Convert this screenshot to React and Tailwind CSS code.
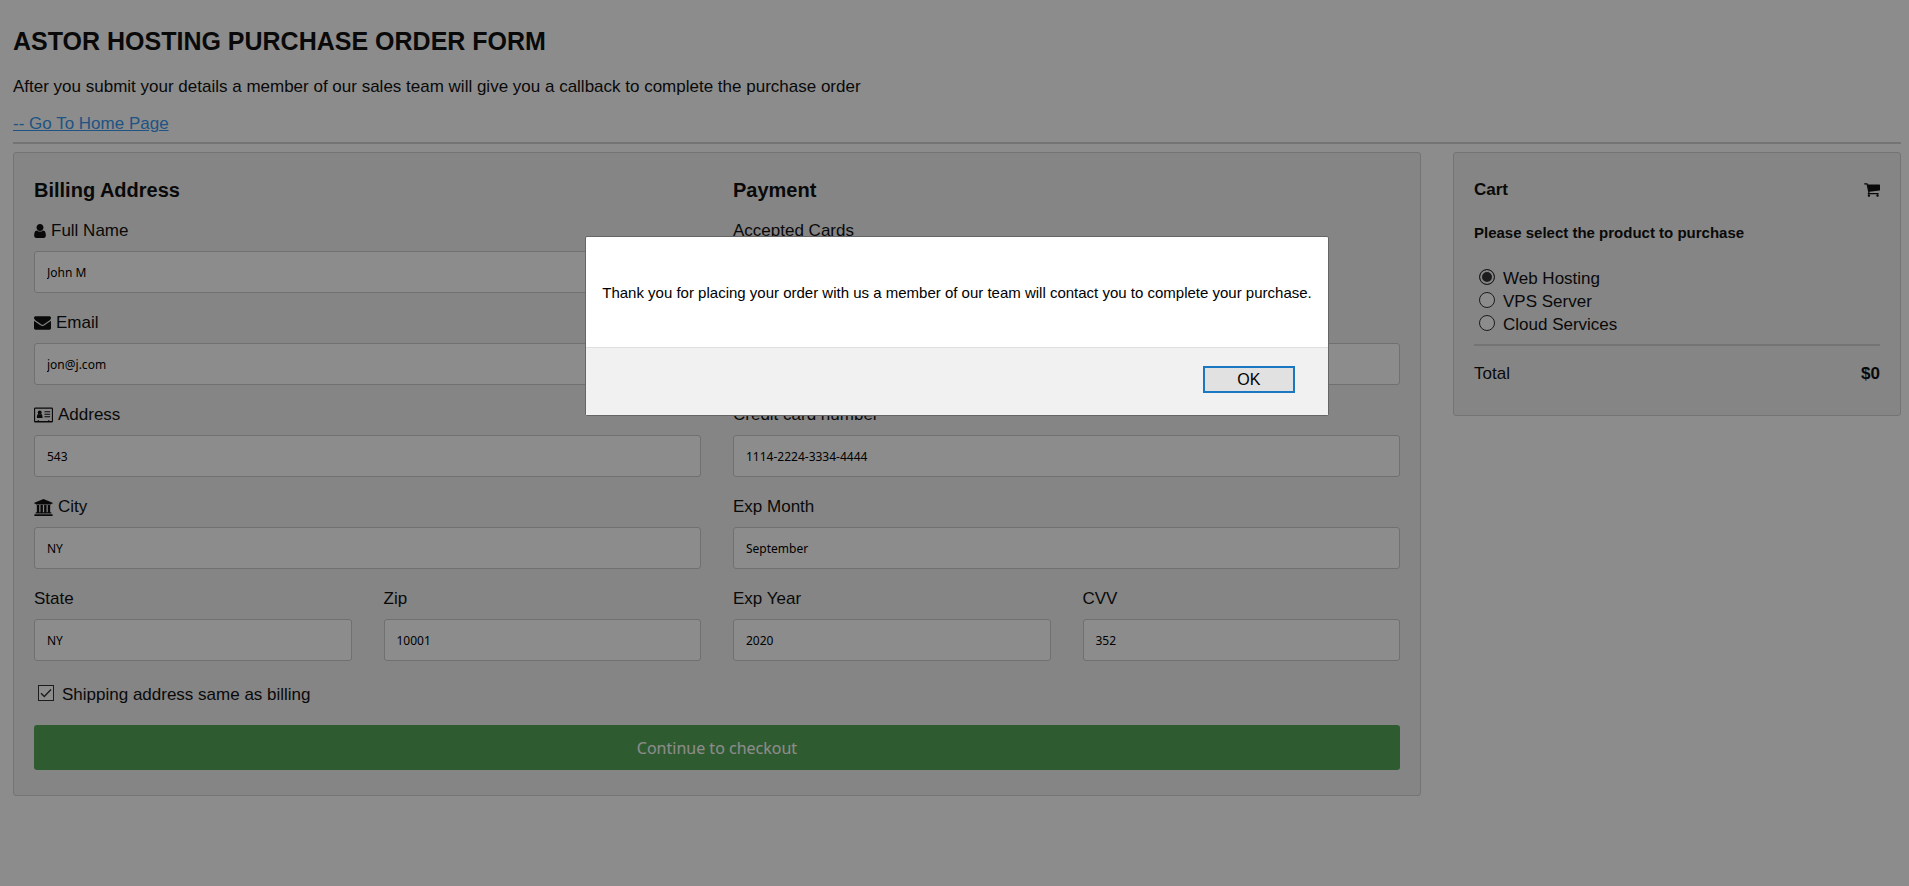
function Icon({ viewBox, className, children }) {
  return (
    <svg viewBox={viewBox} className={className} fill="currentColor" aria-hidden="true">
      {children}
    </svg>
  );
}

const UserIcon = () => (
  <Icon viewBox="0 0 1280 1536" className="h-[14px] w-3">
    <path d="M1280 1271q0 109-62.500 187t-150.500 78h-854q-88 0-150.500-78t-62.500-187q0-85 8.500-160.500t31.500-152 58.500-131 94-89 134.500-34.500q131 128 313 128t313-128q76 0 134.500 34.500t94 89 58.500 131 31.500 152 8.500 160.500zM1024 384q0 159-112.500 271.500t-271.500 112.500-271.500-112.500-112.500-271.500 112.500-271.500 271.500-112.500 271.500 112.500 112.500 271.500z" />
  </Icon>
);

const MailIcon = () => (
  <Icon viewBox="0 0 1792 1408" className="h-[14px] w-[17px]">
    <path d="M1792 454v794q0 66-47 113t-113 47h-1472q-66 0-113-47t-47-113v-794q44 49 101 87 362 246 497 345 57 42 92.500 65.500t94.500 48 110 24.500h2q51 0 110-24.500t94.500-48 92.500-65.500q170-123 498-345 57-39 100-87zM1792 160q0 79-49 151t-122 123q-376 261-468 325-10 7-42.500 30.500t-54 38-52 32.500-57.500 27-50 9h-2q-23 0-50-9t-57.500-27-52-32.500-54-38-42.500-30.500q-91-64-262-182.500t-205-142.500q-62-42-117-115.500t-55-136.500q0-78 41.500-130t118.500-52h1472q65 0 112.500 47t47.500 113z" />
  </Icon>
);

const CardIcon = () => (
  <Icon viewBox="0 0 20 16" className="h-4 w-[19px]">
    <path
      fillRule="evenodd"
      d="M1.500 0h17A1.500 1.500 0 0 1 20 1.500v13a1.500 1.500 0 0 1-1.500 1.500h-17A1.500 1.500 0 0 1 0 14.500v-13A1.500 1.500 0 0 1 1.500 0zM1.200 1.500v12.800h2.600v-.8h1.400v.8h9.600v-.8h1.400v.8h2.600V1.500z"
    />
    <circle cx="6" cy="5.400" r="2.100" />
    <path d="M3 11.200c0-2.500.6-4.200 1.700-4.200.8.700 1.900.7 2.700 0C8.500 7 9 8.700 9 11.200z" />
    <path d="M11 4h6v1h-6zM11 6.700h6v1h-6zM11 9.400h6v1h-6z" />
  </Icon>
);

const BankIcon = () => (
  <Icon viewBox="0 0 1920 1792" className="h-[17px] w-[19px]">
    <path d="M960 0l960 384v128h-128q0 26-20.500 45t-48.500 19h-1526q-28 0-48.500-19t-20.500-45h-128v-128zM256 640h256v768h128v-768h256v768h128v-768h256v768h128v-768h256v768h59q28 0 48.500 19t20.500 45v64h-1664v-64q0-26 20.500-45t48.500-19h59v-768zM1851 1600q28 0 48.500 19t20.500 45v128h-1920v-128q0-26 20.500-45t48.500-19h1782z" />
  </Icon>
);

const CartIcon = () => (
  <Icon viewBox="0 0 1664 1408" className="h-[14px] w-4">
    <path d="M640 1280q0 52-38 90t-90 38-90-38-38-90 38-90 90-38 90 38 38 90zM1536 1280q0 52-38 90t-90 38-90-38-38-90 38-90 90-38 90 38 38 90zM1664 192v512q0 24-16.500 42.500t-40.500 21.500l-1044 122q13 60 13 70 0 16-24 64h920q26 0 45 19t19 45-19 45-45 19h-1024q-26 0-45-19t-19-45q0-11 8-31.500t16-36 21.500-40 15.500-29.500l-177-823h-204q-26 0-45-19t-19-45 19-45 45-19h256q16 0 28.500 6.500t19.500 15.500 13 24.500 8 26 5.500 29.500 4.500 26h1201q26 0 45 19t19 45z" />
  </Icon>
);

function Field({ id, label, icon, value, type = "text" }) {
  return (
    <div className="mb-5 flex flex-col gap-[10px]">
      <label htmlFor={id} className="flex h-5 items-center gap-[5px]">
        {icon}
        <span>{label}</span>
      </label>
      <input
        id={id}
        type={type}
        defaultValue={value}
        className="h-[42px] w-full rounded-[3px] border border-[#cccccc] bg-white px-3 font-['Noto_Sans',sans-serif] text-xs text-black"
      />
    </div>
  );
}

function Product({ id, label, checked }) {
  return (
    <div className="flex h-[23px] items-center gap-2 pl-[5px]">
      <input
        id={id}
        type="radio"
        name="product"
        defaultChecked={checked}
        className="mb-1 size-4 appearance-none rounded-full border border-[#333333] bg-white checked:bg-[#333333] checked:shadow-[inset_0_0_0_2px_#f2f2f2]"
      />
      <label htmlFor={id}>{label}</label>
    </div>
  );
}

export default function App() {
  return (
    <div className="min-h-screen bg-white pr-2 pl-[13px] font-['Liberation_Sans',Arial,sans-serif] text-[17px] leading-5 text-[#111111]">
      <header className="border-b-2 border-[#d3d3d3] pt-[26px] pb-2">
        <h1 className="text-[25px] leading-[30px] font-bold">ASTOR HOSTING PURCHASE ORDER FORM</h1>
        <p className="mt-[21px]">
          After you submit your details a member of our sales team will give you a callback to complete the purchase order
        </p>
        <p className="mt-[17px]">
          <a href="#home" className="text-[#3a98ee] underline">
            -- Go To Home Page
          </a>
        </p>
      </header>

      <main className="-mx-4 mt-2 flex items-start">
        <div className="w-3/4 px-4">
          <form
            className="rounded-[3px] border border-[#d3d3d3] bg-[#f2f2f2] px-5 pt-[25px] pb-[25px]"
            onSubmit={(event) => event.preventDefault()}
          >
            <div className="grid grid-cols-2 gap-x-8">
              <section>
                <h2 className="mb-[19px] text-xl leading-6 font-bold">Billing Address</h2>
                <Field id="name" label="Full Name" icon={<UserIcon />} value="John M" />
                <Field id="email" label="Email" icon={<MailIcon />} value="jon@j.com" />
                <Field id="address" label="Address" icon={<CardIcon />} value="543" />
                <Field id="city" label="City" icon={<BankIcon />} value="NY" />
                <div className="grid grid-cols-2 gap-x-8">
                  <Field id="state" label="State" value="NY" />
                  <Field id="zip" label="Zip" value="10001" />
                </div>
              </section>
              <section>
                <h2 className="mb-[19px] text-xl leading-6 font-bold">Payment</h2>
                <p className="mb-[72px]">Accepted Cards</p>
                <Field id="card-name" label="Name on Card" value="" />
                <Field id="card-number" label="Credit card number" value="1114-2224-3334-4444" />
                <Field id="exp-month" label="Exp Month" value="September" />
                <div className="grid grid-cols-2 gap-x-8">
                  <Field id="exp-year" label="Exp Year" value="2020" />
                  <Field id="cvv" label="CVV" value="352" />
                </div>
              </section>
            </div>
            <div className="flex items-center gap-2 pt-1 pl-1">
              <span className="relative mb-1 flex size-4">
                <input
                  id="same"
                  type="checkbox"
                  defaultChecked
                  className="peer size-4 appearance-none border border-[#333333] bg-white"
                />
                <svg
                  viewBox="0 0 16 16"
                  className="pointer-events-none absolute inset-0 hidden size-4 peer-checked:block"
                  fill="none"
                  stroke="#333333"
                  strokeWidth="1.400"
                  aria-hidden="true"
                >
                  <path d="M3 8.200l3.300 3.300L13 4.500" />
                </svg>
              </span>
              <label htmlFor="same">Shipping address same as billing</label>
            </div>
            <button
              type="submit"
              className="mt-5 h-[45px] w-full rounded-[3px] bg-[#57a759] font-['Noto_Sans',sans-serif] text-base text-white"
            >
              Continue to checkout
            </button>
          </form>
        </div>

        <aside className="w-1/4 px-4">
          <div className="rounded-[3px] border border-[#d3d3d3] bg-[#f2f2f2] px-5 pt-[27px] pb-[31px]">
            <h2 className="flex items-center justify-between font-bold">
              <span>Cart</span>
              <CartIcon />
            </h2>
            <h3 className="mt-[23px] text-[15px] leading-5 font-bold">Please select the product to purchase</h3>
            <fieldset aria-label="Product" className="mt-6 border-b-2 border-[#d3d3d3] pb-2">
              <Product id="web" label="Web Hosting" checked />
              <Product id="vps" label="VPS Server" />
              <Product id="cloud" label="Cloud Services" />
            </fieldset>
            <p className="mt-[18px] flex justify-between">
              <span>Total</span>
              <b>$0</b>
            </p>
          </div>
        </aside>
      </main>

      <div className="fixed inset-0 flex items-start justify-center bg-black/45 pt-[236px] pr-2 pl-[13px]">
        <div
          role="alertdialog"
          aria-modal="true"
          aria-labelledby="message"
          className="rounded-xs border border-[#666666] bg-white text-black"
        >
          <p id="message" className="px-4 pt-[46px] pb-11 text-[15px] leading-5">
            Thank you for placing your order with us a member of our team will contact you to complete your purchase.
          </p>
          <div className="flex justify-end border-t border-[#dfdfdf] bg-[#f1f1f1] pt-[18px] pr-[33px] pb-[22px]">
            <button type="button" className="h-[27px] w-[92px] border-2 border-[#1a78c2] bg-[#e1e1e1] text-base leading-5">
              OK
            </button>
          </div>
        </div>
      </div>
    </div>
  );
}
